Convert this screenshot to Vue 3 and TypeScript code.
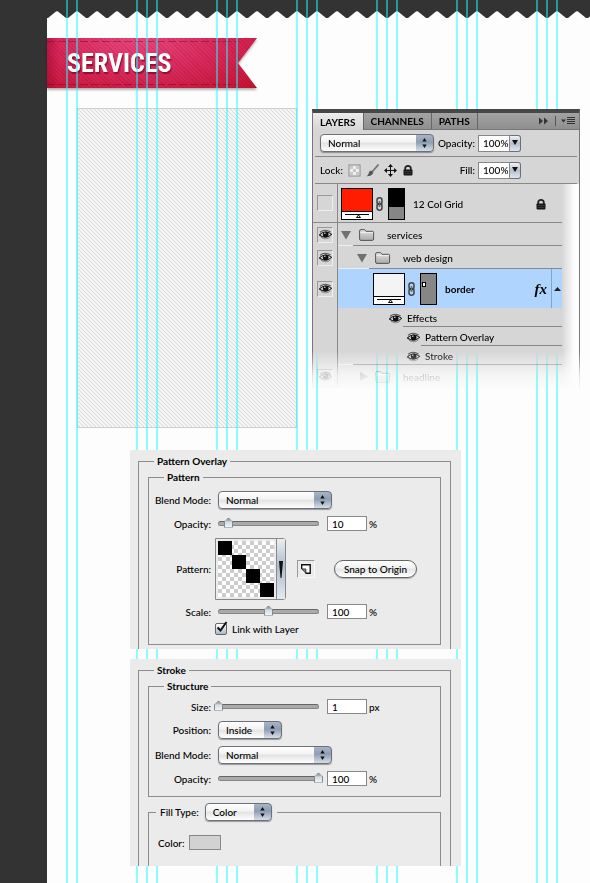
<script setup lang="ts">
import { ref } from 'vue'

interface Layer {
  name: string
  level: number
  kind: 'fill' | 'group' | 'effect'
  eye: 'on' | 'off' | 'none'
  open?: boolean
  locked?: boolean
  selected?: boolean
  color?: string
}

const tabs = ['LAYERS', 'CHANNELS', 'PATHS']
const activeTab = ref('LAYERS')

const layers = ref<Layer[]>([
  { name: '12 Col Grid', level: 0, kind: 'fill', eye: 'off', locked: true, color: '#ff1c00' },
  { name: 'services', level: 1, kind: 'group', eye: 'on', open: true },
  { name: 'web design', level: 2, kind: 'group', eye: 'on', open: true },
  { name: 'border', level: 3, kind: 'fill', eye: 'on', selected: true, color: '#f4f4f4' },
  { name: 'Effects', level: 4, kind: 'effect', eye: 'none' },
  { name: 'Pattern Overlay', level: 5, kind: 'effect', eye: 'none' },
  { name: 'Stroke', level: 6, kind: 'effect', eye: 'none' },
  { name: 'headline', level: 7, kind: 'group', eye: 'on', open: false },
])

const layerMode = ref('Normal')
const layerOpacity = ref('100%')
const layerFill = ref('100%')

const overlayMode = ref('Normal')
const overlayOpacity = ref(10)
const overlayScale = ref(100)
const linked = ref(true)

const strokeSize = ref(1)
const strokePosition = ref('Inside')
const strokeMode = ref('Normal')
const strokeOpacity = ref(100)
const fillType = ref('Color')

function toggleEye(layer: Layer) {
  layer.eye = layer.eye === 'on' ? 'off' : 'on'
}
</script>

<template>
  <svg class="symbols" width="0" height="0" aria-hidden="true">
    <symbol id="eye" viewBox="0 0 13 11">
      <path d="M1 3.2 Q6 -.6 11.6 3" fill="none" stroke="#555" stroke-width="1.1" />
      <path d="M.3 6 Q6 .4 12.7 5.4 Q7 10.6 .3 6Z" fill="#eee" stroke="#222" stroke-width="1.1" />
      <circle cx="6.7" cy="5.4" r="2.9" fill="#111" />
      <circle cx="5.8" cy="4.3" r=".8" fill="#ddd" />
      <path d="M2 8.4 Q7 11.4 11.4 8" fill="none" stroke="#777" stroke-width=".8" />
    </symbol>
    <symbol id="folder" viewBox="0 0 16 12">
      <linearGradient id="folder-face" x2="0" y2="1">
        <stop stop-color="#e4e4e4" />
        <stop offset="1" stop-color="#a9a9a9" />
      </linearGradient>
      <path d="M.6 10V2Q.6.6 2 .6H5.6L7 2.3H13.6Q14.6 2.3 14.6 3.4V10Q14.6 11.4 13.2 11.4H2Q.6 11.4.6 10Z" fill="url(#folder-face)" stroke="#555" />
      <path d="M1.400 3.600H13.800" stroke="#efefef" />
    </symbol>
    <symbol id="chain" viewBox="0 0 7 14">
      <rect x="1" y=".8" width="5" height="6.6" rx="2.4" fill="none" stroke="#444" stroke-width="1.500" />
      <rect x="1" y="6.6" width="5" height="6.6" rx="2.4" fill="none" stroke="#444" stroke-width="1.500" />
      <path d="M3.500 4v6" stroke="#222" stroke-width="1.400" />
      <path d="M3.500 4v6" stroke="#bbb" stroke-width=".5" />
    </symbol>
    <symbol id="lock" viewBox="0 0 10 11">
      <path d="M2.200 5V3.500Q2.200.9 5 .9T7.800 3.500V5" fill="none" stroke="#222" stroke-width="1.800" />
      <rect x=".5" y="4.400" width="9" height="6" rx=".8" fill="#151515" />
      <path d="M1.500 6.400h7M1.500 8.400h7" stroke="#555" stroke-width=".6" />
    </symbol>
    <symbol id="steps" viewBox="0 0 7 12">
      <path d="M3.500 1L5.700 4.600H1.300ZM3.500 11L1.300 7.400H5.700Z" fill="#111" />
    </symbol>
  </svg>

  <main class="page">
    <svg class="teeth" height="8" aria-hidden="true">
      <defs>
        <pattern id="tooth" width="20" height="8" patternUnits="userSpaceOnUse">
          <path d="M0 8V7L1 7L9 .6Q10-.2 11 .6L19 7H20V8Z" fill="#fdfdfd" />
        </pattern>
      </defs>
      <rect width="100%" height="8" fill="url(#tooth)" />
    </svg>

    <div class="paper">
      <header class="ribbon-shadow">
        <h1 class="ribbon">SERVICES</h1>
      </header>

      <div class="columns">
        <svg class="placeholder" aria-hidden="true">
          <defs>
            <pattern id="hatch" width="4" height="4" patternUnits="userSpaceOnUse">
              <rect width="4" height="4" fill="#f5f5f5" />
              <path d="M0 0h1v1H0zM1 1h1v1H1zM2 2h1v1H2zM3 3h1v1H3z" fill="#d9d9d9" />
            </pattern>
          </defs>
          <rect width="100%" height="100%" fill="url(#hatch)" />
        </svg>

        <section class="layers" aria-label="Layers">
          <nav class="tabs">
            <button
              v-for="tab in tabs"
              :key="tab"
              type="button"
              class="tab"
              :class="{ active: tab === activeTab }"
              @click="activeTab = tab"
            >{{ tab }}</button>
            <svg class="tab-tools" width="38" height="10" viewBox="0 0 38 10" aria-hidden="true">
              <path d="M1 1.500L5 5L1 8.500ZM6 1.500L10 5L6 8.500Z" fill="#333" />
              <path d="M17.500 0v10" stroke="#555" />
              <path d="M23 3.500h5L25.500 6.500Z" fill="#333" />
              <path d="M29 1.500h8M29 3.500h8M29 5.500h8M29 7.500h8" stroke="#333" />
            </svg>
          </nav>

          <div class="options">
            <span class="select">
              <select v-model="layerMode" aria-label="Layer blend mode"><option>Normal</option></select>
              <svg width="7" height="12"><use href="#steps" /></svg>
            </span>
            <div class="amount">
              <label for="layer-opacity">Opacity:</label>
              <span class="combo">
                <input id="layer-opacity" v-model="layerOpacity" type="text">
                <button type="button" aria-label="Opacity slider"><svg width="6" height="6"><path d="M0 0h6L3 5Z" fill="#111" /></svg></button>
              </span>
            </div>
          </div>

          <div class="options">
            <div class="locks">
              <span>Lock:</span>
              <button type="button" class="tool" aria-label="Lock transparent pixels">
                <svg width="13" height="13" viewBox="0 0 13 13"><rect x="1" y="1" width="11" height="11" fill="#eee" stroke="#888" /><path d="M2 2h3v3H2zM8 2h3v3H8zM5 5h3v3H5zM2 8h3v3H2zM8 8h3v3H8z" fill="#c8c8c8" /></svg>
              </button>
              <button type="button" class="tool" aria-label="Lock image pixels">
                <svg width="13" height="13" viewBox="0 0 13 13"><path d="M12.500 .5L6 8" stroke="#777" stroke-width="1.800" /><path d="M5 6.500L7.400 8.800Q5.500 12.500 .5 12.300Q2.500 11 3 8.500Q3.500 6.500 5 6.500Z" fill="#555" /></svg>
              </button>
              <button type="button" class="tool" aria-label="Lock position">
                <svg width="13" height="13" viewBox="0 0 13 13"><path d="M6.500 2v9M2 6.500h9" stroke="#111" /><path d="M6.500 0L9 3H4ZM6.500 13L4 10H9ZM0 6.500L3 4V9ZM13 6.500L10 9V4Z" fill="#111" /></svg>
              </button>
              <button type="button" class="tool" aria-label="Lock all"><svg width="10" height="11"><use href="#lock" /></svg></button>
            </div>
            <div class="amount">
              <label for="layer-fill">Fill:</label>
              <span class="combo">
                <input id="layer-fill" v-model="layerFill" type="text">
                <button type="button" aria-label="Fill slider"><svg width="6" height="6"><path d="M0 0h6L3 5Z" fill="#111" /></svg></button>
              </span>
            </div>
          </div>

          <ul class="list">
            <li
              v-for="layer in layers"
              :key="layer.name"
              class="layer"
              :class="[layer.kind, 'level-' + layer.level, { selected: layer.selected }]"
            >
              <div class="visibility">
                <button
                  v-if="layer.eye !== 'none'"
                  type="button"
                  class="eye"
                  :aria-label="'Toggle ' + layer.name"
                  @click="toggleEye(layer)"
                >
                  <svg v-if="layer.eye === 'on'" width="13" height="11"><use href="#eye" /></svg>
                </button>
              </div>
              <div class="content">
                <template v-if="layer.kind === 'fill'">
                  <svg width="32" height="32" viewBox="0 0 32 32" aria-hidden="true">
                    <rect x=".5" y=".5" width="31" height="31" fill="#fff" stroke="#000" />
                    <rect x="1" y="1" width="30" height="22" :fill="layer.color" />
                    <path d="M1 23.500H31M4 26.500H28M15.500 29.500L17.500 27L19.500 29.500Z" fill="#fff" stroke="#000" />
                  </svg>
                  <svg class="chain" width="7" height="14"><use href="#chain" /></svg>
                  <svg width="17" height="32" viewBox="0 0 17 32" aria-hidden="true">
                    <rect x=".5" y=".5" width="16" height="31" fill="#868686" stroke="#000" />
                    <rect v-if="layer.locked" x="1" y="1" width="15" height="18" fill="#000" />
                    <rect v-else x="2.500" y="9.500" width="3" height="4" fill="#fff" stroke="#000" />
                  </svg>
                </template>
                <template v-else-if="layer.kind === 'group'">
                  <svg width="10" height="10" viewBox="0 0 10 10" aria-hidden="true">
                    <path :d="layer.open ? 'M0 1H10L5 9.500Z' : 'M1 0V9L9 4.500Z'" fill="#707070" />
                  </svg>
                  <svg class="folder" width="16" height="12"><use href="#folder" /></svg>
                </template>
                <svg v-else width="13" height="11"><use href="#eye" /></svg>
                <span class="name">{{ layer.name }}</span>
                <svg v-if="layer.locked" class="badge" width="10" height="11"><use href="#lock" /></svg>
                <template v-if="layer.selected">
                  <span class="fx">fx</span>
                  <button type="button" class="collapse" aria-label="Collapse effects">
                    <svg width="7" height="4"><path d="M0 4L3.500 0L7 4Z" fill="#222" /></svg>
                  </button>
                </template>
              </div>
            </li>
          </ul>
        </section>
      </div>

      <section class="dialog" aria-label="Pattern Overlay">
        <fieldset class="outer">
          <legend>Pattern Overlay</legend>
          <fieldset class="inner">
            <legend>Pattern</legend>
            <div class="row">
              <label for="overlay-mode">Blend Mode:</label>
              <span class="select">
                <select id="overlay-mode" v-model="overlayMode"><option>Normal</option></select>
                <svg width="7" height="12"><use href="#steps" /></svg>
              </span>
            </div>
            <div class="row">
              <label for="overlay-opacity">Opacity:</label>
              <span class="slider"><input v-model.number="overlayOpacity" type="range" min="0" max="100" aria-label="Opacity"></span>
              <input id="overlay-opacity" v-model.number="overlayOpacity" class="number" type="text">
              <span class="unit">%</span>
            </div>
            <div class="cluster">
              <div class="row">
                <span class="caption">Pattern:</span>
                <button type="button" class="picker" aria-label="Choose pattern">
                  <svg class="swatch" width="56" height="56" viewBox="0 0 56 56">
                    <defs>
                      <pattern id="checks" width="8" height="8" patternUnits="userSpaceOnUse">
                        <rect width="8" height="8" fill="#fff" />
                        <path d="M0 0h4v4H0zM4 4h4v4H4z" fill="#ccc" />
                      </pattern>
                    </defs>
                    <rect width="56" height="56" fill="url(#checks)" />
                    <path d="M0 0h14v14H0zM14 14h14v14H14zM28 28h14v14H28zM42 42h14v14H42z" fill="#000" />
                  </svg>
                  <span class="picker-arrow"><svg width="4" height="17"><path d="M0 0H4L2.500 17H1.500Z" fill="#111" /></svg></span>
                </button>
                <button type="button" class="preset" aria-label="New preset">
                  <svg width="10" height="10" viewBox="0 0 10 10"><path d="M.7 .7H9.200V9.200H.7Z" fill="#fff" /><path d="M.7 5V.7H9.200V9.200H4.500" fill="none" stroke="#111" stroke-width="1.400" /><path d="M.8 5H4.800V9.200Z" fill="#999" stroke="#222" stroke-width=".9" /></svg>
                </button>
                <button type="button" class="snap">Snap to Origin</button>
              </div>
              <div class="row">
                <label for="overlay-scale">Scale:</label>
                <span class="slider"><input v-model.number="overlayScale" type="range" min="0" max="200" aria-label="Scale"></span>
                <input id="overlay-scale" v-model.number="overlayScale" class="number" type="text">
                <span class="unit">%</span>
              </div>
              <label class="check">
                <span class="box">
                  <input v-model="linked" type="checkbox">
                  <svg v-if="linked" width="13" height="13" viewBox="0 0 13 13"><path d="M2.500 6.500L5.500 9.500L11.500 1" fill="none" stroke="#111" stroke-width="2" /></svg>
                </span>
                Link with Layer
              </label>
            </div>
          </fieldset>
        </fieldset>
      </section>

      <section class="dialog" aria-label="Stroke">
        <fieldset class="outer">
          <legend>Stroke</legend>
          <fieldset class="inner structure">
            <legend>Structure</legend>
            <div class="row">
              <label for="stroke-size">Size:</label>
              <span class="slider"><input v-model.number="strokeSize" type="range" min="1" max="250" aria-label="Size"></span>
              <input id="stroke-size" v-model.number="strokeSize" class="number" type="text">
              <span class="unit">px</span>
            </div>
            <div class="row">
              <label for="stroke-position">Position:</label>
              <span class="select narrow">
                <select id="stroke-position" v-model="strokePosition"><option>Inside</option><option>Center</option><option>Outside</option></select>
                <svg width="7" height="12"><use href="#steps" /></svg>
              </span>
            </div>
            <div class="row">
              <label for="stroke-mode">Blend Mode:</label>
              <span class="select">
                <select id="stroke-mode" v-model="strokeMode"><option>Normal</option></select>
                <svg width="7" height="12"><use href="#steps" /></svg>
              </span>
            </div>
            <div class="row">
              <label for="stroke-opacity">Opacity:</label>
              <span class="slider"><input v-model.number="strokeOpacity" type="range" min="0" max="100" aria-label="Opacity"></span>
              <input id="stroke-opacity" v-model.number="strokeOpacity" class="number" type="text">
              <span class="unit">%</span>
            </div>
          </fieldset>
          <fieldset class="inner fill-type">
            <legend>
              <label for="fill-type">Fill Type:</label>
              <span class="select narrow">
                <select id="fill-type" v-model="fillType"><option>Color</option><option>Gradient</option><option>Pattern</option></select>
                <svg width="7" height="12"><use href="#steps" /></svg>
              </span>
            </legend>
            <div class="color-row">
              <span>Color:</span>
              <button type="button" class="color" aria-label="Stroke color"></button>
            </div>
          </fieldset>
        </fieldset>
      </section>
    </div>
    <div class="guides" aria-hidden="true"></div>
  </main>
</template>

<style>
body {
  background: #333;
}
</style>

<style scoped>
* {
  box-sizing: border-box;
}

.symbols {
  position: absolute;
}

.page {
  position: relative;
  display: flex;
  flex-direction: column;
  min-height: 100vh;
  padding: 11px 0 0 47px;
  overflow: hidden;
  background: #333;
  color: #000;
  font: 500 10px/14px Lato, "Open Sans", sans-serif;
}

button,
input,
select {
  margin: 0;
  padding: 0;
  border: 0;
  border-radius: 0;
  background: none;
  color: inherit;
  font: inherit;
}

svg {
  display: block;
  flex: none;
}

.teeth {
  width: 100%;
}

.paper {
  flex: 1;
  padding: 19px 0 17px;
  background: #fdfdfd;
}

/* twelve-column guides */
.guides {
  position: absolute;
  z-index: 1;
  inset: 0 0 0 66px;
  background: repeating-linear-gradient(
    to right,
    rgba(24, 255, 255, 0.5) 0 2px,
    transparent 2px 10px,
    rgba(24, 255, 255, 0.5) 10px 12px,
    transparent 12px 70px,
    rgba(24, 255, 255, 0.5) 70px 72px,
    transparent 72px 80px
  );
  pointer-events: none;
}

.ribbon-shadow {
  width: 210px;
  filter: drop-shadow(0 2px 1px rgba(0, 0, 0, 0.3));
}

.ribbon {
  height: 50px;
  margin: 0;
  padding-left: 20px;
  clip-path: polygon(0 0, 100% 0, 191px 50%, 100% 100%, 0 100%);
  background:
    repeating-linear-gradient(to right, rgba(120, 0, 40, 0.45) 0 8px, transparent 8px 11px) 0 3px / 191px 1px no-repeat,
    repeating-linear-gradient(to right, rgba(120, 0, 40, 0.45) 0 8px, transparent 8px 11px) 0 46px / 191px 1px no-repeat,
    repeating-linear-gradient(45deg, rgba(120, 0, 40, 0.14) 0 1px, transparent 1px 3px),
    linear-gradient(to right, rgba(150, 0, 40, 0.4), transparent 12px),
    radial-gradient(ellipse at 44% 0, #e8487f 0, #d8295b 50%, #c4122f 100%);
  color: #fff;
  font: 700 26px/51px "Roboto Condensed", "Liberation Sans Narrow", "Liberation Sans", sans-serif;
  text-shadow: 1px 2px 1px rgba(100, 0, 20, 0.6);
}

.columns {
  display: flex;
  align-items: flex-start;
  gap: 15px;
  padding: 20px 10px 0 30px;
}

.placeholder {
  width: 220px;
  height: 320px;
  border: 1px solid #cfcfcf;
}

/* layers panel */
.layers {
  position: relative;
  z-index: 2;
  flex: 1;
  min-width: 0;
  margin-top: 1px;
  border: 1px solid #777;
  border-top: 4px solid #474747;
  border-bottom: 0;
  background: #d6d6d6;
  mask-image: linear-gradient(to bottom, #000 242px, rgba(0, 0, 0, 0.75) 250px, rgba(0, 0, 0, 0.2) 266px, transparent 284px);
}

.tabs {
  display: flex;
  align-items: center;
  height: 17px;
  border-bottom: 1px solid #777;
  background: linear-gradient(#a3a3a3, #8f8f8f);
}

.tab {
  height: 16px;
  padding: 0 7px;
  border-right: 1px solid #666;
  font-weight: 700;
  line-height: 16px;
}

.tab.active {
  align-self: flex-start;
  height: 17px;
  background: linear-gradient(#ececec, #d6d6d6);
}

.tab-tools {
  margin: 0 3px 0 auto;
}

.options {
  display: grid;
  grid-template-columns: 115px 86px;
  align-items: center;
  height: 27px;
  margin: 0 2px;
  padding-left: 5px;
  border-bottom: 1px solid #888;
}

.amount {
  display: flex;
  align-items: center;
  justify-content: flex-end;
  gap: 3px;
}

.combo {
  display: flex;
  height: 17px;
}

.combo input {
  width: 32px;
  padding-left: 4px;
  border: 1px solid #888;
  background: #fff;
}

.combo button {
  display: grid;
  place-items: center;
  width: 11px;
  border: 1px solid #68707c;
  border-left: 0;
  border-radius: 0 3px 3px 0;
  background: linear-gradient(#f2f4f8, #b4bfce 50%, #e0e6ee);
}

.locks {
  display: flex;
  align-items: center;
  gap: 5px;
}

.tool {
  display: grid;
  place-items: center;
  width: 13px;
}

.list {
  margin: 0;
  padding: 0 17px 0 0;
  background: linear-gradient(to right, #d6d6d6, #fdfdfd 12px) right / 17px 100% no-repeat;
  list-style: none;
}

.layer {
  display: grid;
  grid-template-columns: 25px 1fr;
  height: 23px;
}

.layer.fill {
  height: 39px;
}

.layer.effect {
  height: 19px;
}

.visibility {
  display: grid;
  place-items: center;
  border-right: 1px solid #888;
}

.level-0 .visibility {
  border-bottom: 1px solid #888;
}

.eye {
  display: grid;
  place-items: center;
  width: 16px;
  height: 16px;
  border: 1px solid;
  border-color: #999 #eee #eee #999;
}

.content {
  --indent: 0px;
  display: flex;
  align-items: center;
  padding: 1px 0 0 3px;
  background: linear-gradient(to right, #eee var(--indent), #888 var(--indent)) bottom / 100% 1px no-repeat;
}

.level-1 .content {
  --indent: 15px;
}

.level-2 .content {
  --indent: 31px;
  padding-left: 19px;
}

.level-3 .content {
  padding: 0 0 0 35px;
  background: #afd5ff;
}

.level-4 .content {
  padding-left: 51px;
  background: linear-gradient(#888, #888) 65px bottom / 100% 1px no-repeat;
}

.level-5 .content {
  padding-left: 69px;
  background: linear-gradient(#888, #888) 83px bottom / 100% 1px no-repeat;
}

.level-6 .content {
  --indent: 15px;
  padding-left: 69px;
}

.level-7 .content {
  padding-left: 21px;
  background: none;
}

.chain {
  margin: 0 5px 0 3px;
}

.folder {
  margin-left: 8px;
}

.level-7 .folder {
  margin-left: 6px;
}

.name {
  margin-left: 5px;
}

.fill .name {
  margin-left: 8px;
}

.group .name {
  margin-left: 12px;
}

.selected .name {
  font-weight: 700;
}

.badge {
  margin: 0 16px 0 auto;
}

.fx {
  margin: 0 4px 0 auto;
  font: italic 700 15px/16px "Liberation Serif", serif;
}

.collapse {
  display: grid;
  place-items: center;
  align-self: stretch;
  width: 11px;
  border-left: 1px solid #86a2c4;
}

/* layer style dialogs */
.dialog {
  position: relative;
  z-index: 2;
  width: 331px;
  margin: 22px 0 0 83px;
  padding: 4px 10px 0 8px;
  background: #ebebeb;
}

.dialog + .dialog {
  margin-top: 10px;
}

fieldset {
  min-width: 0;
  margin: 0;
  padding: 0;
  border: 1px solid #8c8c8c;
}

legend {
  margin-left: 15px;
  padding: 0 3px;
  font-weight: 700;
}

.outer {
  padding: 2px 9px 4px;
  border-bottom: 0;
}

.outer > legend {
  margin-left: 6px;
}

.inner {
  display: flex;
  flex-direction: column;
  gap: 7px;
  padding: 7px 0 9px;
}

.structure {
  padding: 6px 0 10px;
}

.row {
  display: flex;
  align-items: center;
}

.row > label,
.caption {
  width: 62px;
  margin-right: 7px;
  text-align: right;
}

.cluster {
  display: grid;
  gap: 4px;
}

.select {
  position: relative;
  display: inline-flex;
  width: 114px;
  height: 18px;
}

.select.narrow {
  width: 64px;
}

.select select {
  width: 100%;
  padding-left: 7px;
  border: 1px solid #6d7078;
  border-radius: 4px;
  background:
    linear-gradient(#a9b5c6, #8d9db2 45%, #d5dfea) right / 17px 100% no-repeat,
    linear-gradient(#fff, #f2f2f2 45%, #e2e2e2 50%, #fff);
  box-shadow: 0 1px 1px rgba(0, 0, 0, 0.35);
  line-height: 16px;
  appearance: none;
}

.select svg {
  position: absolute;
  top: 3px;
  right: 6px;
  pointer-events: none;
}

.slider {
  position: relative;
  display: flex;
  width: 109px;
  margin: 0 4px 0 -4px;
}

.slider::before {
  position: absolute;
  inset: 5px 4px;
  border: 1px solid #858585;
  border-top-color: #666;
  border-radius: 3px;
  background: #aaa;
  content: "";
}

.slider input {
  position: relative;
  width: 100%;
  height: 15px;
  padding-bottom: 2px;
  appearance: none;
}

.slider input::-webkit-slider-thumb {
  width: 9px;
  height: 10px;
  clip-path: polygon(50% 0, 100% 40%, 100% 100%, 0 100%, 0 40%);
  border: 1px solid #7f8890;
  background: linear-gradient(#9aa3ab 0 1px, #d4dde4 3px, #eef3f6);
  appearance: none;
}

.number {
  width: 40px;
  height: 15px;
  padding-left: 4px;
  border: 1px solid #888;
  background: #fff;
}

.unit {
  margin-left: 2px;
}

.picker {
  display: flex;
  width: 71px;
  height: 62px;
  margin-left: -3px;
  border: 1px solid #888;
  border-radius: 0 3px 3px 0;
}

.swatch {
  margin: 2px;
}

.picker-arrow {
  display: grid;
  flex: 1;
  place-items: center;
  border-left: 1px solid #888;
  background: linear-gradient(#eceff2, #aebccb 45%, #e4eaf0);
}

.preset {
  display: grid;
  place-items: center;
  width: 18px;
  height: 18px;
  margin: 0 19px 0 11px;
  border: 1px solid;
  border-color: #999 #f8f8f8 #f8f8f8 #999;
}

.snap {
  width: 83px;
  height: 18px;
  border: 1px solid #666;
  border-radius: 9px;
  background: linear-gradient(#fff, #f0f0f0 45%, #e4e4e4 50%, #fff);
  box-shadow: 0 1px 1px rgba(0, 0, 0, 0.25);
  line-height: 16px;
}

.check {
  display: flex;
  align-items: center;
  gap: 5px;
  height: 12px;
  margin-left: 66px;
}

.box {
  position: relative;
  display: flex;
}

.box input {
  width: 12px;
  height: 12px;
  border: 1px solid #666;
  border-radius: 2px;
  background: linear-gradient(#fff, #aab7c8);
  appearance: none;
}

.box svg {
  position: absolute;
  top: -2px;
  left: 0;
  pointer-events: none;
}

.fill-type {
  margin-top: 6px;
  padding: 14px 9px 16px;
  border-bottom: 0;
}

.outer:has(.fill-type) {
  padding-bottom: 0;
}

.fill-type legend {
  display: flex;
  align-items: center;
  gap: 6px;
  margin-left: -2px;
  padding: 0 5px 0 4px;
  font-weight: inherit;
}

.fill-type .select {
  width: 67px;
}

.color-row {
  display: flex;
  align-items: center;
  gap: 4px;
}

.color {
  width: 32px;
  height: 15px;
  border: 1px solid #888;
  background: #d2d2d2;
}
</style>
